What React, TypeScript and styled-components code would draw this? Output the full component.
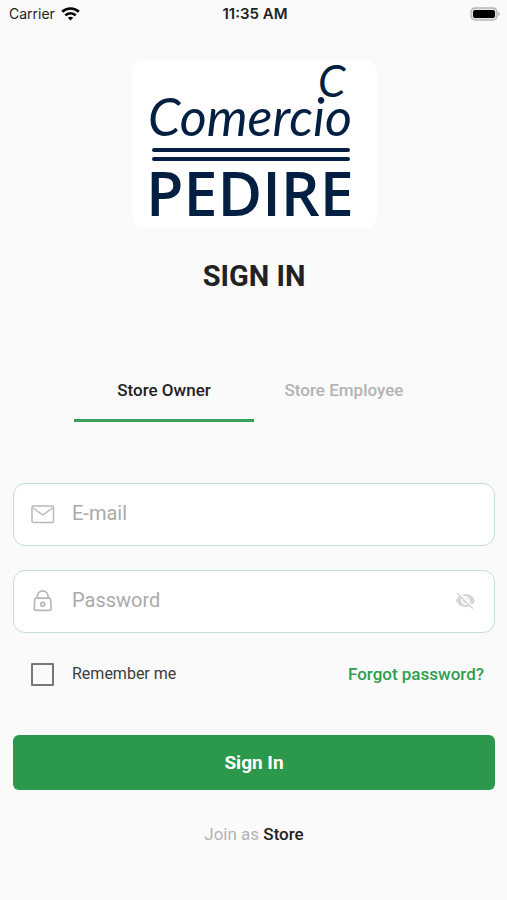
import React, { useState } from "react";
import styled, { createGlobalStyle } from "styled-components";
import { MdVisibility, MdVisibilityOff } from "react-icons/md";

const GlobalStyle = createGlobalStyle`
  *, *::before, *::after { box-sizing: border-box; }
  body {
    margin: 0;
    background: #fafafa;
    color: #222222;
    font-family: Roboto, "Liberation Sans", sans-serif;
  }
  button, input { font-family: inherit; }
`;

const Screen = styled.div`
  display: flex;
  flex-direction: column;
  min-height: 100vh;
  background: #fafafa;
`;

const StatusBar = styled.header`
  display: grid;
  grid-template-columns: 1fr auto 1fr;
  align-items: center;
  height: 28px;
  padding: 0 6px 0 9px;
  font-family: Inter, sans-serif;
  font-size: 14px;
  line-height: 20px;
  color: #222222;
`;

const Carrier = styled.div`
  display: flex;
  align-items: center;
  gap: 6px;
`;

const Clock = styled.time`
  font-size: 15px;
  font-weight: 600;
`;

const Battery = styled.svg`
  justify-self: end;
`;

const Main = styled.main`
  display: flex;
  flex-direction: column;
  padding: 32px 12px 0 13px;
`;

const LogoCard = styled.div`
  align-self: center;
  border-radius: 12px;
  background: #ffffff;
  line-height: 0;
`;

const LogoDrawing = styled.svg`
  overflow: visible;
`;

const LogoScript = styled.text<{ $size: number }>`
  font-family: Lato, sans-serif;
  font-size: ${(p) => p.$size}px;
  font-style: italic;
`;

const LogoName = styled.text`
  font-family: "Open Sans", sans-serif;
  font-size: 61px;
  font-weight: 600;
`;

const Title = styled.h1`
  margin: 28px 0 0;
  font-size: 29px;
  line-height: 40px;
  font-weight: 700;
  text-align: center;
`;

const Tabs = styled.div`
  display: grid;
  grid-template-columns: 1fr 1fr;
  align-self: center;
  width: 100%;
  max-width: 360px;
  margin-top: 63px;
`;

const Tab = styled.button<{ $active: boolean }>`
  height: 63px;
  padding: 2px 0 0;
  border: 0;
  border-bottom: 3px solid ${(p) => (p.$active ? "#37a058" : "transparent")};
  background: none;
  color: ${(p) => (p.$active ? "#222222" : "#b3b3b3")};
  font-size: 17px;
  line-height: 24px;
  font-weight: 500;
  cursor: pointer;
`;

const Form = styled.form`
  display: flex;
  flex-direction: column;
  margin-top: 61px;
`;

const Fields = styled.div`
  display: grid;
  gap: 24px;
`;

const Field = styled.div`
  display: flex;
  align-items: center;
  height: 63px;
  padding: 0 18px 2px 17px;
  border: 1px solid #bfe0cd;
  border-radius: 12px;
  background: #ffffff;
`;

const FieldIcon = styled.label`
  display: flex;
  width: 41px;
`;

const TextInput = styled.input`
  flex: 1;
  min-width: 0;
  height: 48px;
  padding: 0 0 2px;
  border: 0;
  outline: 0;
  background: none;
  color: #222222;
  font-size: 20px;
  &::placeholder {
    color: #aaaaaa;
    opacity: 1;
  }
`;

const RevealButton = styled.button`
  display: flex;
  padding: 0;
  border: 0;
  background: none;
  color: #d6d6d6;
  font-size: 21px;
  cursor: pointer;
`;

const Options = styled.div`
  display: flex;
  align-items: center;
  justify-content: space-between;
  margin-top: 29px;
  padding: 0 11px 0 18px;
  line-height: 24px;
`;

const Remember = styled.label`
  display: flex;
  align-items: center;
  gap: 18px;
  color: #3c3c3c;
  font-size: 16px;
  cursor: pointer;
`;

const Checkbox = styled.input`
  appearance: none;
  width: 23px;
  height: 23px;
  margin: 0;
  border: 2px solid #777777;
  border-radius: 1px;
  &:checked {
    border-color: #2b984b;
    background: #2b984b;
    box-shadow: inset 0 0 0 3px #fafafa;
  }
`;

const ForgotLink = styled.a`
  color: #2f9e50;
  font-size: 17px;
  font-weight: 500;
  text-decoration: none;
`;

const SubmitButton = styled.button`
  height: 55px;
  margin-top: 49px;
  padding: 0;
  border: 0;
  border-radius: 6px;
  background: #2b984b;
  color: #ffffff;
  font-size: 19px;
  font-weight: 700;
  cursor: pointer;
`;

const JoinLine = styled.p`
  margin: 32px 0 0;
  color: #b3b3b3;
  font-size: 17px;
  line-height: 24px;
  text-align: center;
`;

const JoinLink = styled.a`
  color: #222222;
  font-weight: 500;
  text-decoration: none;
`;

function WifiIcon() {
  return (
    <svg width="19" height="14" viewBox="0 0 19 14" fill="none" stroke="#000000" strokeWidth="2.7" aria-hidden="true">
      <path d="M1.2 4.8C5.8.4 13.2.4 17.8 4.8" />
      <path d="M4.3 8.4c2.9-2.9 7.5-2.9 10.4 0" />
      <path d="M9.5 13.6 6.8 10.7c1.5-1.4 3.9-1.4 5.4 0z" fill="#000000" stroke="none" />
    </svg>
  );
}

function BatteryIcon() {
  return (
    <Battery width="31" height="15" viewBox="0 0 31 15" role="img" aria-label="Battery full">
      <rect x="1" y="1" width="26" height="12" rx="4" fill="#e4e4e4" stroke="#b9b9b9" strokeWidth="1.5" />
      <rect x="3" y="3" width="22" height="8" rx="2" fill="#000000" />
      <path d="M28.3 4.8c2.2.8 2.2 3.6 0 4.4z" fill="#b9b9b9" />
    </Battery>
  );
}

function Logo() {
  return (
    <LogoDrawing width="245" height="168" viewBox="0 0 245 168" fill="#031f42" role="img" aria-label="Comercio Pedire">
      <LogoScript $size={44} x="186" y="37">C</LogoScript>
      <LogoScript $size={52} x="16" y="76">Comercio</LogoScript>
      <rect x="20" y="88" width="198" height="4" rx="2" />
      <rect x="20" y="97" width="198" height="4" rx="2" />
      <LogoName x="14" y="156">PEDIRE</LogoName>
    </LogoDrawing>
  );
}

function MailIcon() {
  return (
    <svg width="24" height="24" viewBox="0 0 24 24" fill="none" stroke="#b8b8b8" strokeWidth="1.5" strokeLinejoin="round" aria-hidden="true">
      <rect x="1" y="4" width="21.5" height="16.5" rx="1.5" />
      <path d="M2 6l9.8 7L21.5 6" />
    </svg>
  );
}

function LockIcon() {
  return (
    <svg width="24" height="24" viewBox="0 0 24 24" fill="none" stroke="#b8b8b8" strokeWidth="1.7" strokeLinejoin="round" aria-hidden="true">
      <path d="M5 9.2h13.4c.8 0 1.2.4 1.2 1.2l.6 9.4c0 1-.6 1.6-1.6 1.6H4.8c-1 0-1.6-.6-1.6-1.6l.6-9.4c0-.8.4-1.2 1.2-1.2z" />
      <path d="M6.3 9V7.6a5.4 5.8 0 0 1 10.8 0V9" />
      <circle cx="11.7" cy="15.2" r="1.9" />
    </svg>
  );
}

const roles = ["Store Owner", "Store Employee"];

export default function App() {
  const [role, setRole] = useState(roles[0]);
  const [visible, setVisible] = useState(false);

  return (
    <Screen>
      <GlobalStyle />
      <StatusBar>
        <Carrier>
          Carrier
          <WifiIcon />
        </Carrier>
        <Clock>11:35 AM</Clock>
        <BatteryIcon />
      </StatusBar>
      <Main>
        <LogoCard>
          <Logo />
        </LogoCard>
        <Title>SIGN IN</Title>
        <Tabs role="tablist">
          {roles.map((name) => (
            <Tab
              key={name}
              type="button"
              role="tab"
              aria-selected={role === name}
              $active={role === name}
              onClick={() => setRole(name)}
            >
              {name}
            </Tab>
          ))}
        </Tabs>
        <Form onSubmit={(event) => event.preventDefault()}>
          <Fields>
            <Field>
              <FieldIcon htmlFor="email" aria-label="E-mail">
                <MailIcon />
              </FieldIcon>
              <TextInput id="email" type="email" placeholder="E-mail" />
            </Field>
            <Field>
              <FieldIcon htmlFor="password" aria-label="Password">
                <LockIcon />
              </FieldIcon>
              <TextInput id="password" type={visible ? "text" : "password"} placeholder="Password" />
              <RevealButton
                type="button"
                aria-label={visible ? "Hide password" : "Show password"}
                onClick={() => setVisible(!visible)}
              >
                {visible ? <MdVisibility /> : <MdVisibilityOff />}
              </RevealButton>
            </Field>
          </Fields>
          <Options>
            <Remember>
              <Checkbox type="checkbox" />
              Remember me
            </Remember>
            <ForgotLink href="#forgot">Forgot password?</ForgotLink>
          </Options>
          <SubmitButton type="submit">Sign In</SubmitButton>
        </Form>
        <JoinLine>
          Join as <JoinLink href="#join">Store</JoinLink>
        </JoinLine>
      </Main>
    </Screen>
  );
}
